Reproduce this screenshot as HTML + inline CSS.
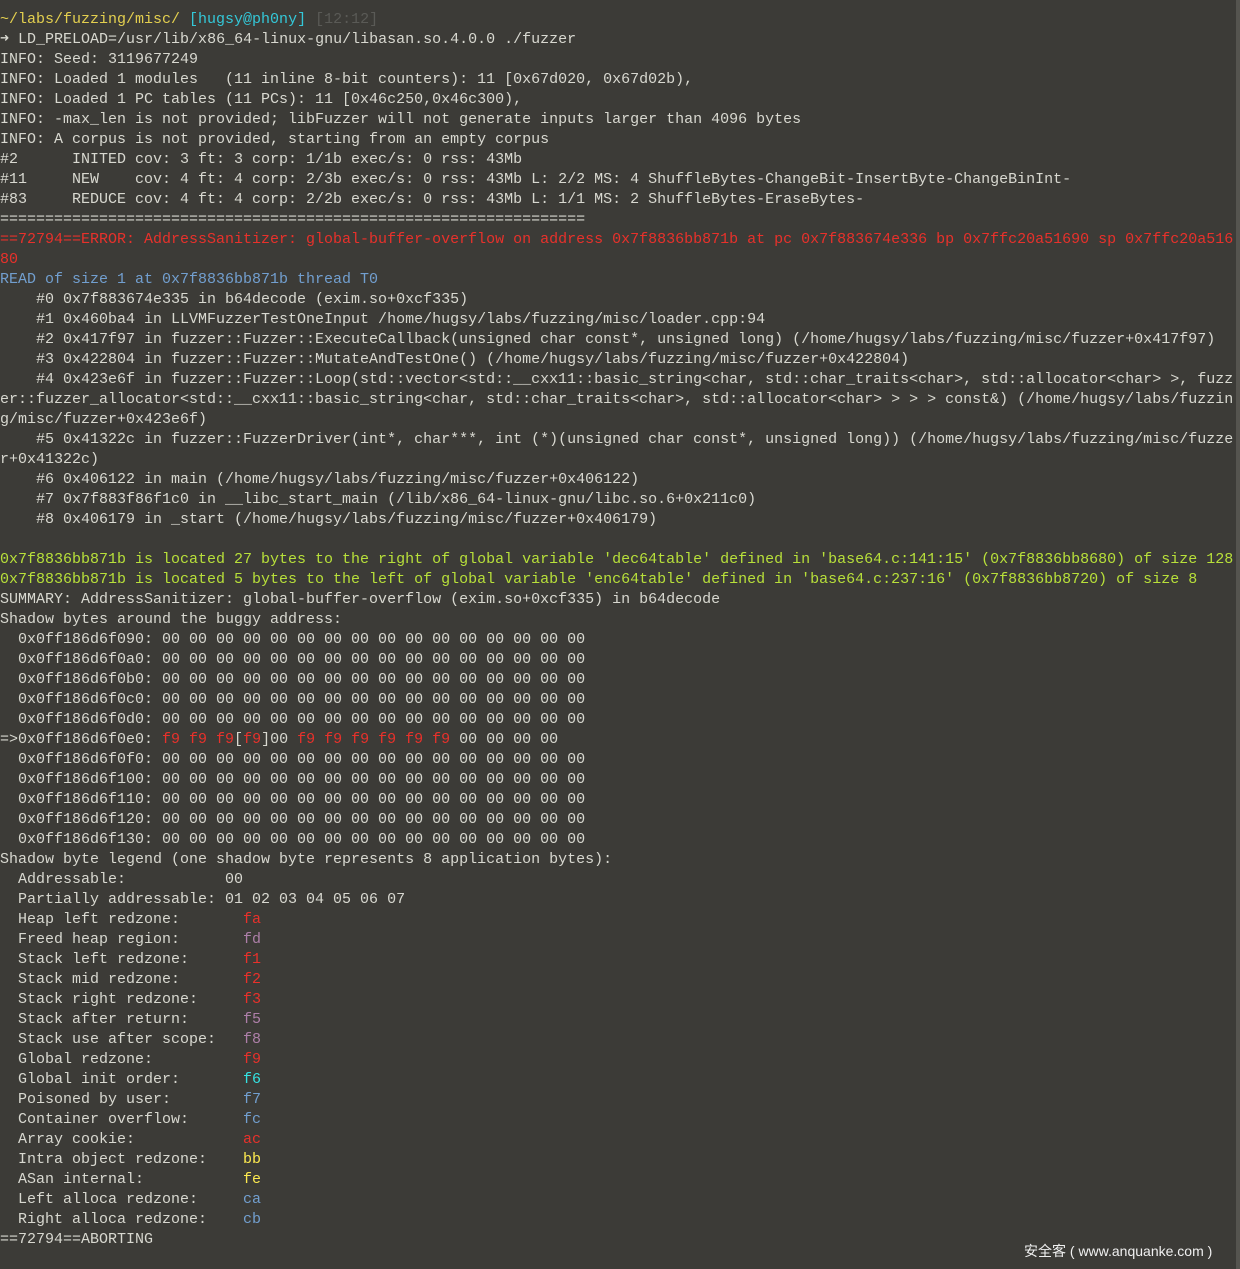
<!DOCTYPE html>
<html><head><meta charset="utf-8"><style>
html,body{margin:0;padding:0;}
body{width:1240px;height:1269px;background:#3c3b37;overflow:hidden;position:relative;}
pre{margin:0;padding:10px 0 0 0;font-family:"Liberation Mono",monospace;font-size:15px;line-height:20px;color:#d8d8d0;white-space:pre;}
.r{color:#e8312b}.g{color:#b8e03a}.b{color:#729fcf}.y{color:#e3cf4f}.c{color:#34c8d8}.d{color:#5a5a56}
.p{color:#ad7fa8}.cy{color:#34e2e2}.yy{color:#fce94f}
.sb{position:absolute;right:0;top:0;width:4px;height:1269px;background:#55544f;}
.wm{position:absolute;left:1024px;top:1241px;font-family:"Liberation Sans","Noto Sans CJK SC",sans-serif;font-size:14px;color:#f0f0f0;}
</style></head><body>
<pre><span class="y">~/labs/fuzzing/misc/</span> <span class="c">[hugsy@ph0ny]</span> <span class="d">[12:12]</span>
➜ LD_PRELOAD=/usr/lib/x86_64-linux-gnu/libasan.so.4.0.0 ./fuzzer
INFO: Seed: 3119677249
INFO: Loaded 1 modules   (11 inline 8-bit counters): 11 [0x67d020, 0x67d02b),
INFO: Loaded 1 PC tables (11 PCs): 11 [0x46c250,0x46c300),
INFO: -max_len is not provided; libFuzzer will not generate inputs larger than 4096 bytes
INFO: A corpus is not provided, starting from an empty corpus
#2      INITED cov: 3 ft: 3 corp: 1/1b exec/s: 0 rss: 43Mb
#11     NEW    cov: 4 ft: 4 corp: 2/3b exec/s: 0 rss: 43Mb L: 2/2 MS: 4 ShuffleBytes-ChangeBit-InsertByte-ChangeBinInt-
#83     REDUCE cov: 4 ft: 4 corp: 2/2b exec/s: 0 rss: 43Mb L: 1/1 MS: 2 ShuffleBytes-EraseBytes-
=================================================================
<span class="r">==72794==ERROR: AddressSanitizer: global-buffer-overflow on address 0x7f8836bb871b at pc 0x7f883674e336 bp 0x7ffc20a51690 sp 0x7ffc20a516
80</span>
<span class="b">READ of size 1 at 0x7f8836bb871b thread T0</span>
    #0 0x7f883674e335 in b64decode (exim.so+0xcf335)
    #1 0x460ba4 in LLVMFuzzerTestOneInput /home/hugsy/labs/fuzzing/misc/loader.cpp:94
    #2 0x417f97 in fuzzer::Fuzzer::ExecuteCallback(unsigned char const*, unsigned long) (/home/hugsy/labs/fuzzing/misc/fuzzer+0x417f97)
    #3 0x422804 in fuzzer::Fuzzer::MutateAndTestOne() (/home/hugsy/labs/fuzzing/misc/fuzzer+0x422804)
    #4 0x423e6f in fuzzer::Fuzzer::Loop(std::vector&lt;std::__cxx11::basic_string&lt;char, std::char_traits&lt;char&gt;, std::allocator&lt;char&gt; &gt;, fuzz
er::fuzzer_allocator&lt;std::__cxx11::basic_string&lt;char, std::char_traits&lt;char&gt;, std::allocator&lt;char&gt; &gt; &gt; &gt; const&amp;) (/home/hugsy/labs/fuzzin
g/misc/fuzzer+0x423e6f)
    #5 0x41322c in fuzzer::FuzzerDriver(int*, char***, int (*)(unsigned char const*, unsigned long)) (/home/hugsy/labs/fuzzing/misc/fuzze
r+0x41322c)
    #6 0x406122 in main (/home/hugsy/labs/fuzzing/misc/fuzzer+0x406122)
    #7 0x7f883f86f1c0 in __libc_start_main (/lib/x86_64-linux-gnu/libc.so.6+0x211c0)
    #8 0x406179 in _start (/home/hugsy/labs/fuzzing/misc/fuzzer+0x406179)

<span class="g">0x7f8836bb871b is located 27 bytes to the right of global variable 'dec64table' defined in 'base64.c:141:15' (0x7f8836bb8680) of size 128
0x7f8836bb871b is located 5 bytes to the left of global variable 'enc64table' defined in 'base64.c:237:16' (0x7f8836bb8720) of size 8</span>
SUMMARY: AddressSanitizer: global-buffer-overflow (exim.so+0xcf335) in b64decode
Shadow bytes around the buggy address:
  0x0ff186d6f090: 00 00 00 00 00 00 00 00 00 00 00 00 00 00 00 00
  0x0ff186d6f0a0: 00 00 00 00 00 00 00 00 00 00 00 00 00 00 00 00
  0x0ff186d6f0b0: 00 00 00 00 00 00 00 00 00 00 00 00 00 00 00 00
  0x0ff186d6f0c0: 00 00 00 00 00 00 00 00 00 00 00 00 00 00 00 00
  0x0ff186d6f0d0: 00 00 00 00 00 00 00 00 00 00 00 00 00 00 00 00
=&gt;0x0ff186d6f0e0: <span class="r">f9 f9 f9</span>[<span class="r">f9</span>]00 <span class="r">f9 f9 f9 f9 f9 f9</span> 00 00 00 00
  0x0ff186d6f0f0: 00 00 00 00 00 00 00 00 00 00 00 00 00 00 00 00
  0x0ff186d6f100: 00 00 00 00 00 00 00 00 00 00 00 00 00 00 00 00
  0x0ff186d6f110: 00 00 00 00 00 00 00 00 00 00 00 00 00 00 00 00
  0x0ff186d6f120: 00 00 00 00 00 00 00 00 00 00 00 00 00 00 00 00
  0x0ff186d6f130: 00 00 00 00 00 00 00 00 00 00 00 00 00 00 00 00
Shadow byte legend (one shadow byte represents 8 application bytes):
  Addressable:           00
  Partially addressable: 01 02 03 04 05 06 07
  Heap left redzone:       <span class="r">fa</span>
  Freed heap region:       <span class="p">fd</span>
  Stack left redzone:      <span class="r">f1</span>
  Stack mid redzone:       <span class="r">f2</span>
  Stack right redzone:     <span class="r">f3</span>
  Stack after return:      <span class="p">f5</span>
  Stack use after scope:   <span class="p">f8</span>
  Global redzone:          <span class="r">f9</span>
  Global init order:       <span class="cy">f6</span>
  Poisoned by user:        <span class="b">f7</span>
  Container overflow:      <span class="b">fc</span>
  Array cookie:            <span class="r">ac</span>
  Intra object redzone:    <span class="yy">bb</span>
  ASan internal:           <span class="yy">fe</span>
  Left alloca redzone:     <span class="b">ca</span>
  Right alloca redzone:    <span class="b">cb</span>
==72794==ABORTING</pre>
<div class="sb"></div>
<div class="wm">安全客 ( www.anquanke.com )</div>
</body></html>
